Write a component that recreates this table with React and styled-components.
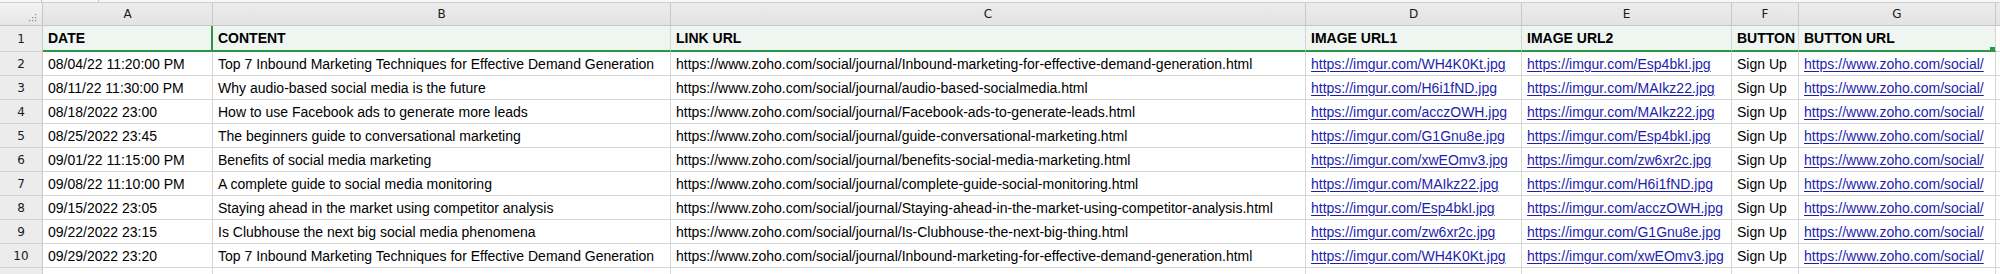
import styled, { createGlobalStyle } from "styled-components";

const GlobalStyle = createGlobalStyle`
  html, body {
    margin: 0;
    padding: 0;
    background: #ffffff;
    overflow: hidden;
  }
`;

const COLS = ["A", "B", "C", "D", "E", "F", "G"];
const WIDTHS = "43px 170px 458px 635px 216px 210px 67px 197px 1fr";

const ROWS = [
  ["DATE", "CONTENT", "LINK URL", "IMAGE URL1", "IMAGE URL2", "BUTTON", "BUTTON URL"],
  ["08/04/22 11:20:00 PM", "Top 7 Inbound Marketing Techniques for Effective Demand Generation", "Inbound-marketing-for-effective-demand-generation.html", "WH4K0Kt", "Esp4bkI"],
  ["08/11/22 11:30:00 PM", "Why audio-based social media is the future", "audio-based-socialmedia.html", "H6i1fND", "MAIkz22"],
  ["08/18/2022 23:00", "How to use Facebook ads to generate more leads", "Facebook-ads-to-generate-leads.html", "acczOWH", "MAIkz22"],
  ["08/25/2022 23:45", "The beginners guide to conversational marketing", "guide-conversational-marketing.html", "G1Gnu8e", "Esp4bkI"],
  ["09/01/22 11:15:00 PM", "Benefits of social media marketing", "benefits-social-media-marketing.html", "xwEOmv3", "zw6xr2c"],
  ["09/08/22 11:10:00 PM", "A complete guide to social media monitoring", "complete-guide-social-monitoring.html", "MAIkz22", "H6i1fND"],
  ["09/15/2022 23:05", "Staying ahead in the market using competitor analysis", "Staying-ahead-in-the-market-using-competitor-analysis.html", "Esp4bkI", "acczOWH"],
  ["09/22/2022 23:15", "Is Clubhouse the next big social media phenomena", "Is-Clubhouse-the-next-big-thing.html", "zw6xr2c", "G1Gnu8e"],
  ["09/29/2022 23:20", "Top 7 Inbound Marketing Techniques for Effective Demand Generation", "Inbound-marketing-for-effective-demand-generation.html", "WH4K0Kt", "xwEOmv3"],
];

const Page = styled.div`
  width: 2000px;
  height: 274px;
  overflow: hidden;
  background: #fff;
`;

const ToolStrip = styled.div`
  height: 2px;
  background: #f7f7f7;
  border-bottom: 1px solid #cfcfcf;
  display: flex;
`;

const StripDivider = styled.span`
  width: ${(p) => p.$w}px;
  border-right: 1px solid #c4c4c4;
  box-sizing: border-box;
`;

const Grid = styled.div`
  display: grid;
  grid-template-columns: ${WIDTHS};
  grid-template-rows: 23px 26px repeat(10, 24px) 24px;
  font-family: "Liberation Sans", Arial, sans-serif;
  font-size: 14px;
  color: #000;
`;

const Corner = styled.div`
  position: relative;
  background: linear-gradient(#f3f3f3, #e6e6e6);
  border-right: 1px solid #c6c6c6;
  border-bottom: 1px solid #c6c6c6;
  box-sizing: border-box;
  > svg {
    position: absolute;
    right: 5px;
    bottom: 3px;
  }
`;

const ColHead = styled.div`
  background: linear-gradient(#ececec, #e3e3e3);
  border-right: 1px solid #c9c9c9;
  border-bottom: 1px solid #c6c6c6;
  box-sizing: border-box;
  display: flex;
  align-items: center;
  justify-content: center;
  font-family: "DejaVu Sans", Verdana, sans-serif;
  font-size: 12px;
  color: #1a1a1a;
`;

const RowHead = styled.div`
  background: #ececec;
  border-right: 1px solid #c9c9c9;
  border-bottom: 1px solid #d3d3d3;
  box-sizing: border-box;
  display: flex;
  align-items: center;
  justify-content: center;
  font-family: "DejaVu Sans", Verdana, sans-serif;
  font-size: 12px;
  color: #1a1a1a;
`;

const Cell = styled.div`
  position: relative;
  box-sizing: border-box;
  padding: 0 3px 0 5px;
  display: flex;
  align-items: center;
  white-space: nowrap;
  overflow: hidden;
  border-right: ${(p) => (p.$edge ? "2px solid #2a9646" : "1px solid #d6d6d6")};
  border-bottom: ${(p) => (p.$sel ? "2px solid #2a9646" : "1px solid #d6d6d6")};
  background: ${(p) => (p.$sel ? "#eff6f1" : "#fff")};
  font-weight: ${(p) => (p.$sel ? 700 : 400)};
  color: ${(p) => (p.$link ? "#1d1db0" : "#000")};
  text-decoration: ${(p) => (p.$link ? "underline" : "none")};
  text-underline-offset: 2px;
`;

const FillHandle = styled.span`
  position: absolute;
  right: 0;
  bottom: -2px;
  width: 5px;
  height: 5px;
  background: #2a9646;
`;

const Grip = () => (
  <svg width="10" height="10" viewBox="0 0 10 10">
    {[
      [8, 2], [8, 5], [5, 5], [8, 8], [5, 8], [2, 8],
    ].map(([x, y]) => (
      <rect key={`${x}-${y}`} x={x} y={y} width="1.2" height="1.2" fill="#8a8a8a" />
    ))}
  </svg>
);

const buildRow = (row, i) => {
  if (i === 0) return row;
  const [date, content, slug, img1, img2] = row;
  return [
    date,
    content,
    `https://www.zoho.com/social/journal/${slug}`,
    `https://imgur.com/${img1}.jpg`,
    `https://imgur.com/${img2}.jpg`,
    "Sign Up",
    "https://www.zoho.com/social/",
  ];
};

const LINK_COLS = [3, 4, 6];

export default function App() {
  return (
    <Page>
      <GlobalStyle />
      <ToolStrip>
        <StripDivider $w={42} />
        <StripDivider $w={57} />
      </ToolStrip>
      <Grid>
        <Corner>
          <Grip />
        </Corner>
        {COLS.map((c) => (
          <ColHead key={c}>{c}</ColHead>
        ))}
        <ColHead />
        {ROWS.map((raw, i) => {
          const row = buildRow(raw, i);
          const sel = i === 0;
          return [
            <RowHead key={`h${i}`}>{i + 1}</RowHead>,
            ...row.map((val, j) => (
              <Cell
                key={`${i}-${j}`}
                $sel={sel}
                $edge={sel && j === 0}
                $link={!sel && LINK_COLS.includes(j)}
              >
                {val}
                {sel && j === 6 && <FillHandle />}
              </Cell>
            )),
            <Cell key={`${i}-x`} $sel={false} />,
          ];
        })}
        <RowHead />
        {COLS.map((c) => (
          <Cell key={`last-${c}`} />
        ))}
        <Cell />
      </Grid>
    </Page>
  );
}
